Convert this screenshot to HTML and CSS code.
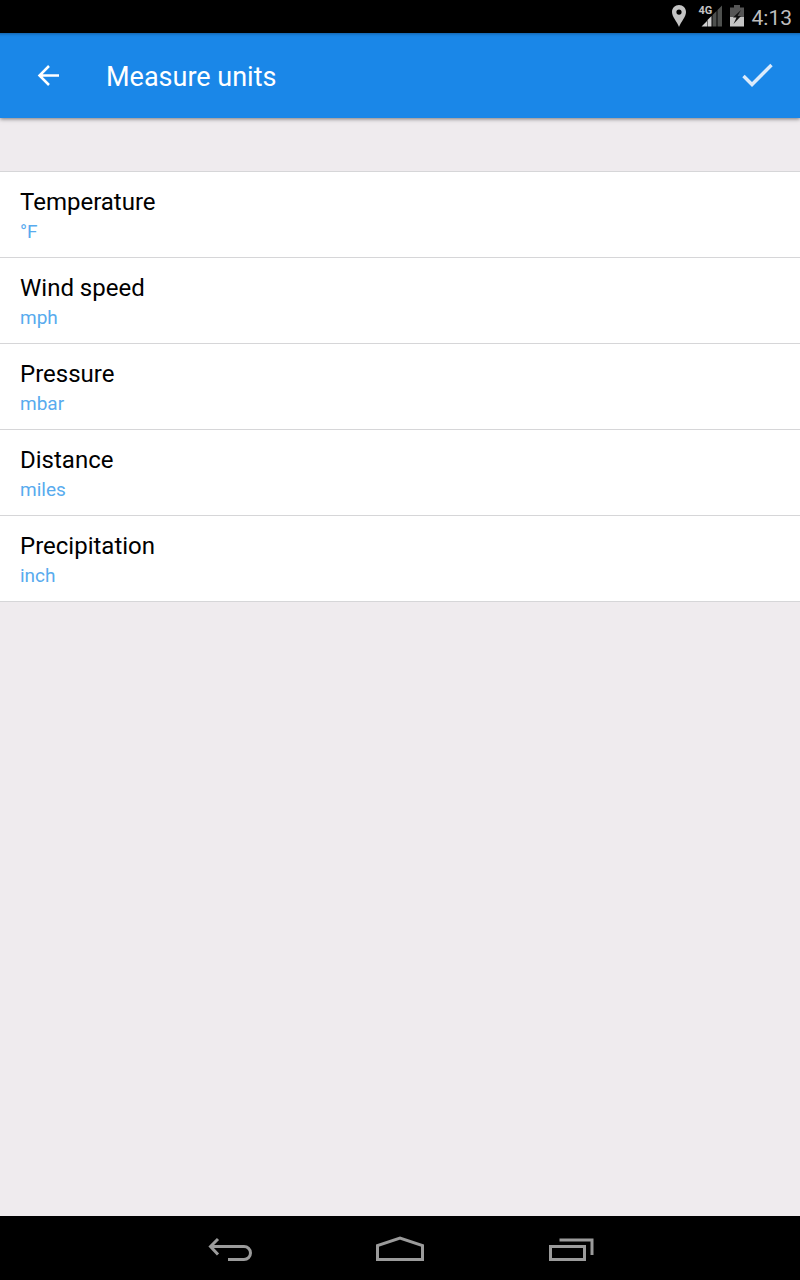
FILE: index.html
```html
<!DOCTYPE html>
<html lang="en">
<head>
<meta charset="utf-8">
<meta name="viewport" content="width=device-width, initial-scale=1">
<title>Measure units</title>
<link rel="stylesheet" href="styles.css">
</head>
<body>
<div class="screen">
  <div class="status-bar">
    <svg class="status-icon" width="16" height="22" viewBox="0 0 16 22" aria-hidden="true">
      <path fill="#c4c4c4" fill-rule="evenodd" d="M8 0C4 0 1 3 1 7c0 5 5 9.500 7 15 2-5.500 7-10 7-15 0-4-3-7-7-7zm0 4.500a2.600 2.600 0 1 1 0 5.200 2.600 2.600 0 0 1 0-5.200z"/>
    </svg>
    <span class="signal">
      <svg width="24" height="22" viewBox="0 0 24 22" aria-hidden="true">
        <path fill="#4e504e" d="M13.500 10l4-4v15.500h-4zM18.500 5L23 .5v21h-4.500z"/>
        <path fill="#d0d0d0" d="M2.500 21.500l5.500-5.500v5.500zM8.500 15l4-4v10.500h-4z"/>
      </svg>
      <span class="network">4G</span>
    </span>
    <svg class="status-icon" width="16" height="22" viewBox="0 0 16 22" aria-hidden="true">
      <path fill="#555" d="M5 0h6v2.500h4V12H1V2.500h4z"/>
      <path fill="#c4c4c4" d="M1 12h14v9.500H1z"/>
      <path fill="#111" d="M12 5L4 12.500h3.500L4.500 19l7.500-8H8.500z"/>
    </svg>
    <time class="clock">4:13</time>
  </div>
  <header class="app-bar">
    <button class="bar-button" type="button" aria-label="Back">
      <svg width="24" height="24" viewBox="0 0 24 24" fill="none" stroke="#fff" stroke-width="2.500" aria-hidden="true">
        <path d="M23 11.500H4M13 2L3.500 11.500 13 21"/>
      </svg>
    </button>
    <h1 class="title">Measure units</h1>
    <button class="bar-button" type="button" aria-label="Done">
      <svg width="32" height="26" viewBox="0 0 32 26" fill="none" stroke="#dcebfb" stroke-width="3.400" aria-hidden="true">
        <path d="M1.500 13l8.500 8.500L29.500 2"/>
      </svg>
    </button>
  </header>
  <main class="content">
    <ul class="units">
      <li><button class="unit" type="button"><span class="name">Temperature</span><span class="value">°F</span></button></li>
      <li><button class="unit" type="button"><span class="name">Wind speed</span><span class="value">mph</span></button></li>
      <li><button class="unit" type="button"><span class="name">Pressure</span><span class="value">mbar</span></button></li>
      <li><button class="unit" type="button"><span class="name">Distance</span><span class="value">miles</span></button></li>
      <li><button class="unit" type="button"><span class="name">Precipitation</span><span class="value">inch</span></button></li>
    </ul>
  </main>
  <nav class="nav-bar" aria-label="System navigation">
    <button class="nav-button" type="button" aria-label="Back">
      <svg width="48" height="32" viewBox="0 0 48 32" aria-hidden="true"><path d="M4 14.500h34a6.500 6.500 0 0 1 0 13H22M12 7l-7.500 7.500L12 22.500"/></svg>
    </button>
    <button class="nav-button" type="button" aria-label="Home">
      <svg width="48" height="32" viewBox="0 0 48 32" aria-hidden="true"><path d="M1.500 27.500V13.500L24 6l22.500 7.500v14z"/></svg>
    </button>
    <button class="nav-button" type="button" aria-label="Recent apps">
      <svg width="48" height="32" viewBox="0 0 48 32" aria-hidden="true"><path d="M4.500 14.500h34v13h-34zM13.500 8h32.500v15"/></svg>
    </button>
  </nav>
</div>
</body>
</html>
```
FILE: styles.css
```css
* {
  box-sizing: border-box;
}

body {
  margin: 0;
  font-family: Roboto, "Liberation Sans", sans-serif;
  background: #efebee;
}

button {
  margin: 0;
  padding: 0;
  border: 0;
  background: none;
  font: inherit;
  color: inherit;
  cursor: pointer;
}

svg {
  display: block;
}

.screen {
  display: flex;
  flex-direction: column;
  min-height: 100vh;
}

.status-bar {
  display: flex;
  justify-content: flex-end;
  align-items: center;
  gap: 6px;
  height: 33px;
  padding-right: 8px;
  background: #000;
}

.status-icon,
.signal {
  margin-bottom: 2px;
}

.signal {
  position: relative;
  margin-left: 6px;
}

.network {
  position: absolute;
  top: 0;
  left: 0;
  font-size: 11px;
  line-height: 12px;
  font-weight: 700;
  color: #c4c4c4;
}

.clock {
  padding: 2px 0 0 1px;
  font-size: 21px;
  line-height: 26px;
  color: #bebebe;
}

.app-bar {
  display: flex;
  align-items: center;
  height: 85px;
  padding: 0 20px 0 24px;
  background: #1a87e8;
  color: #fff;
  box-shadow: 0 1px 4px rgba(0, 0, 0, 0.5), inset 0 4px 3px -3px rgba(0, 0, 0, 0.3);
}

.bar-button {
  display: flex;
  align-items: center;
  justify-content: center;
  width: 48px;
  height: 48px;
}

.app-bar .bar-button:last-child {
  width: 45px;
}

.title {
  flex: 1;
  margin: 0;
  padding: 2px 0 0 34px;
  font-size: 27px;
  line-height: 32px;
  font-weight: 400;
}

.content {
  flex: 1;
  padding-top: 53px;
}

.units {
  margin: 0;
  padding: 0;
  list-style: none;
  background: #fff;
  border-top: 1px solid #d6d6d8;
}

.unit {
  display: flex;
  flex-direction: column;
  align-items: flex-start;
  gap: 2px;
  width: 100%;
  padding: 14px 20px 13px;
  border-bottom: 1px solid #d6d6d8;
}

.name {
  font-size: 24px;
  line-height: 32px;
  color: #000;
}

.value {
  font-size: 19px;
  line-height: 24px;
  color: #58abee;
}

.nav-bar {
  display: flex;
  justify-content: center;
  height: 64px;
  background: #000;
}

.nav-button {
  display: flex;
  align-items: center;
  justify-content: center;
  width: 170px;
}

.nav-button svg {
  fill: none;
  stroke: #9b9b9b;
  stroke-width: 3;
}
```
